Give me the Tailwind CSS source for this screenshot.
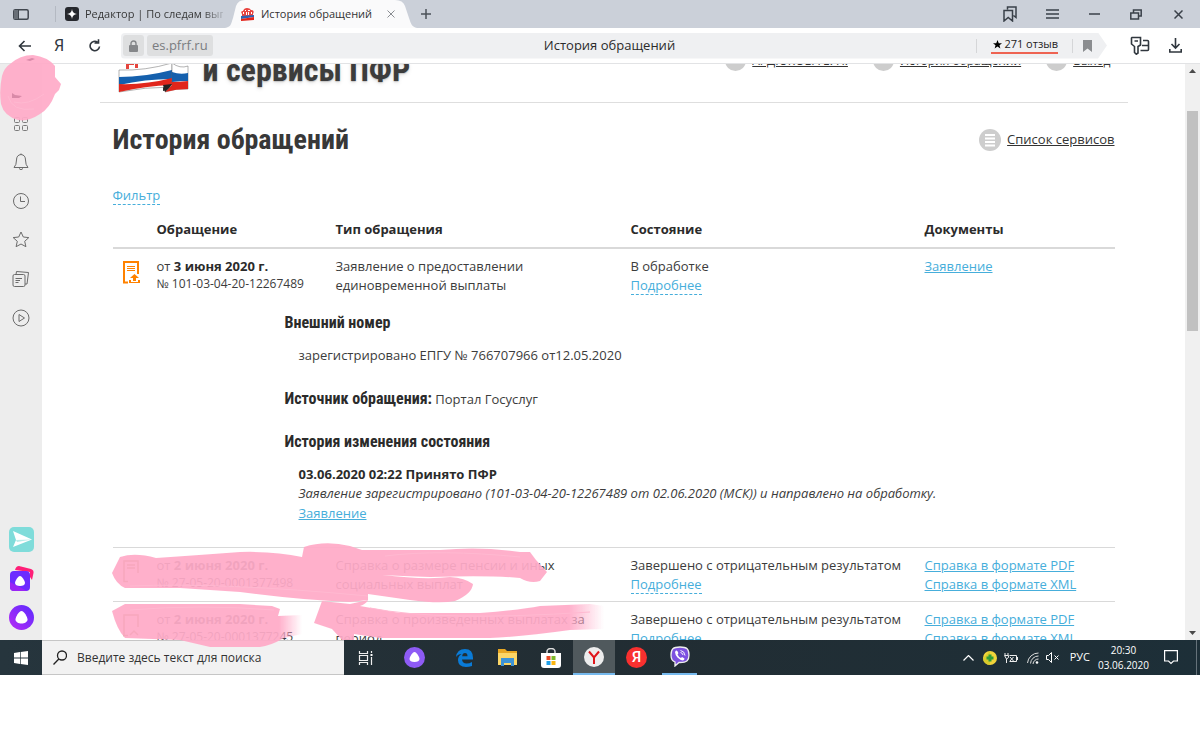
<!DOCTYPE html>
<html lang="ru">
<head>
  <meta charset="UTF-8">
  <meta name="viewport" content="width=device-width, initial-scale=1.0">
  <title>История обращений</title>
  <script src="https://cdn.jsdelivr.net/npm/@tailwindcss/browser@4"></script>
</head>
<body class="relative flex h-screen flex-col overflow-hidden bg-white pb-[71px] font-['Open_Sans','Noto_Sans',sans-serif] text-[13px] text-[#3c3c3c]">

  <!-- Вкладки -->
  <header class="flex h-7 shrink-0 items-center bg-[#cbd0d9] text-[11px] text-[#333]">
    <button class="ml-[13px] mr-[26px]" aria-label="Панель вкладок">
      <svg class="h-[11px] w-4" viewBox="0 0 16 11" fill="none" stroke="#40464e"><rect x="0.8" y="0.8" width="14.4" height="9.4" rx="1.5" stroke-width="1.5"/><path d="M1 1h4v9H1z" fill="#6a7078" stroke="none"/><path d="M5.500 1v9"/></svg>
    </button>
    <div class="flex h-4 w-[170px] items-center border-l border-[#b4b9c2] pl-[9px]">
      <svg class="mr-[6px] h-[14px] w-[14px] shrink-0" viewBox="0 0 14 14"><rect width="14" height="14" rx="3" fill="#26282d"/><path d="M7 2Q7.4 6.600 12 7Q7.400 7.400 7 12Q6.600 7.400 2 7Q6.600 6.600 7 2z" fill="#fff"/></svg>
      <span class="w-[138px] shrink-0 overflow-hidden bg-linear-to-r from-[#333] from-85% to-[#333]/20 bg-clip-text whitespace-nowrap text-transparent">Редактор | По следам вып</span>
    </div>
    <div class="relative flex h-7 w-[192px] items-center pl-[15px]">
      <svg class="absolute inset-0 h-7 w-[192px]" viewBox="0 0 192 28" preserveAspectRatio="none"><path d="M0 28C6 27 6 24 8 18L11 6Q13 0 20 0H170Q178 0 180 6L184 18C186 24 187 27 192 28z" fill="#fafafb"/></svg>
      <svg class="relative mr-[6px] h-[15px] w-[15px]" viewBox="0 0 15 15"><path d="M2 7Q0 4 3 4Q4 1 7 1Q10 1 11 3Q15 3 13 7v2H2z" fill="#e8433f"/><path d="M3 5h1v2H3zM5 3h1v1H5zM6 5h1v3H6zM8 5h1v3H8zM8 3h2v1H8zM11 5h1v2h-1z" fill="#fff"/><path d="M1 9l13-1v2l-13 2z" fill="#2c62b4"/><path d="M1 12l13-2v3l-13 1z" fill="#e2231a"/></svg>
      <span class="relative">История обращений</span>
      <button class="relative ml-auto mr-[22px]" aria-label="Закрыть вкладку">
        <svg class="h-2 w-2" viewBox="0 0 8 8" stroke="#8a8d92"><path d="M0.500 0.500l7 7M7.500 0.500l-7 7"/></svg>
      </button>
    </div>
    <button class="ml-1" aria-label="Новая вкладка">
      <svg class="h-[10px] w-[10px]" viewBox="0 0 10 10" stroke="#4c5159" stroke-width="1.500"><path d="M5 0v10M0 5h10"/></svg>
    </button>
    <div class="ml-auto mr-px flex items-center">
      <button class="flex w-[42px] justify-center" aria-label="Закладки"><svg class="h-4 w-[14px]" viewBox="0 0 14 16" fill="none" stroke="#3a4049" stroke-width="1.500"><path d="M4.500 3.500V1H13V11.500L10.500 9.500M1 4.500h8.500V15L5.200 11.500L1 15z"/></svg></button>
      <button class="flex w-[42px] justify-center" aria-label="Меню"><svg class="h-[10px] w-[13px]" viewBox="0 0 13 10" stroke="#3a4049" stroke-width="1.500"><path d="M0 1h13M0 5h13M0 9h13"/></svg></button>
      <button class="flex w-[42px] justify-center" aria-label="Свернуть"><svg class="h-[10px] w-[11px]" viewBox="0 0 11 10" stroke="#3a4049" stroke-width="1.500"><path d="M0 5h11"/></svg></button>
      <button class="flex w-[42px] justify-center" aria-label="Восстановить"><svg class="h-[11px] w-3" viewBox="0 0 12 11" fill="none" stroke="#3a4049" stroke-width="1.500"><path d="M3.500 3.500V1h7.700v6H9M0.800 4h7.700v6H0.800z"/></svg></button>
      <button class="flex w-[42px] justify-center" aria-label="Закрыть"><svg class="h-[9px] w-[9px]" viewBox="0 0 9 9" stroke="#3a4049" stroke-width="1.500"><path d="M0.500 0.500l8 8M8.500 0.500l-8 8"/></svg></button>
    </div>
  </header>

  <!-- Адресная строка -->
  <nav class="flex h-9 shrink-0 items-center border-b border-[#e2e3e5] bg-white">
    <button class="ml-[18px]" aria-label="Назад"><svg class="h-3 w-[13px]" viewBox="0 0 13 12" fill="none" stroke="#30373e" stroke-width="1.600"><path d="M13 6H1.500M6.500 1L1.500 6l5 5"/></svg></button>
    <button class="ml-[23px] w-[10px] text-center font-['Roboto',sans-serif] text-[16px] text-[#30373e]">Я</button>
    <button class="ml-[25px]" aria-label="Обновить"><svg class="h-[13px] w-3" viewBox="0 0 12 13" fill="none" stroke="#30373e" stroke-width="1.600"><path d="M10.500 7.500a4.700 4.700 0 1 1-2-4.400M5.500 4h4V0.300"/></svg></button>
    <div class="ml-5 flex h-[26px] flex-1 items-center rounded-l bg-[#eff0f2] pl-[2px] [clip-path:polygon(0_0,calc(100%-9px)_0,100%_50%,calc(100%-9px)_100%,0_100%)]">
      <span class="mr-[3px] flex h-[21px] w-[21px] items-center justify-center rounded-[3px] bg-[#dedfe0]"><svg class="h-3 w-[9px]" viewBox="0 0 9 12"><path d="M2 6V3.500a2.500 2.500 0 0 1 5 0V6" fill="none" stroke="#85878a" stroke-width="1.400"/><rect y="5" width="9" height="7" rx="1" fill="#85878a"/></svg></span>
      <span class="rounded-[3px] bg-[#dedfe0] px-[5px] leading-[21px] text-[#7a7c7f]">es.pfrf.ru</span>
      <span class="flex-1 pl-[30px] text-center text-[#2b2b2b]">История обращений</span>
      <span class="h-[14px] border-l border-[#d5d6d8]"></span>
      <span class="ml-[14px] flex h-[17px] items-center border-b-2 border-[#ee6352] text-[11px] text-[#222]"><svg class="mx-[2px] h-[9px] w-[9px]" viewBox="0 0 10 10"><path d="M5 0l1.400 3.500H10L7.200 5.800 8.200 9.500 5 7.300 1.800 9.500 2.800 5.800 0 3.500h3.600z"/></svg>271 отзыв</span>
      <span class="ml-[14px] h-[14px] border-l border-[#d5d6d8]"></span>
      <svg class="ml-[10px] mr-[15px] h-3 w-[9px]" viewBox="0 0 9 12"><path d="M0 0h9v12L4.500 8.500 0 12z" fill="#8b8d90"/></svg>
    </div>
    <button class="ml-[23px]" aria-label="Пароли"><svg class="h-[19px] w-5" viewBox="0 0 20 19" fill="none" stroke="#30373e" stroke-width="1.600"><path d="M2 1.500h8.500V9L8 10.500V17L6.300 18.200 4.500 16.500V10.500L1.500 8V2zM4.500 5h3.500M13 4.500h4.500a1 1 0 0 1 1 1v8a1 1 0 0 1-1 1H10.500M12 9.500h6.500"/></svg></button>
    <button class="ml-[19px] mr-[18px]" aria-label="Загрузки"><svg class="h-[15px] w-[13px]" viewBox="0 0 13 15" fill="none" stroke="#30373e" stroke-width="1.600"><path d="M6.500 0v9.500M2.500 6l4 4 4-4M0.800 11v3h11.400v-3"/></svg></button>
  </nav>

  <div class="flex min-h-0 flex-1">
    <!-- Боковая панель браузера -->
    <aside class="flex w-[42px] shrink-0 flex-col items-center bg-[#ededed] pb-[10px] pt-[49px]">
      <div class="flex flex-col items-center gap-[19px]">
        <svg class="h-5 w-4" viewBox="0 0 16 20" fill="none" stroke="#7b7b7b"><rect x="1.500" y="4.500" width="5" height="5" rx="1"/><rect x="9.500" y="4.500" width="5" height="5" rx="1"/><rect x="1.500" y="12.500" width="5" height="5" rx="1"/><rect x="9.500" y="12.500" width="5" height="5" rx="1"/></svg>
        <svg class="h-5 w-4" viewBox="0 0 16 20" fill="none" stroke="#6b6b6b"><path d="M8 1.500v1M1 15.500Q3.500 13 3.500 8Q3.500 3 8 2.500Q12.500 3 12.500 8Q12.500 13 15 15.500zM6 16.500Q8 19 10 16.500"/></svg>
        <svg class="h-5 w-[18px]" viewBox="0 0 18 20" fill="none" stroke="#6b6b6b"><circle cx="9" cy="10" r="7.500"/><path d="M8.500 5.500V10.500h4.500"/></svg>
        <svg class="h-5 w-[18px]" viewBox="0 0 18 20" fill="none" stroke="#6b6b6b"><path d="M9 2l2.300 5 5.500.600-4.100 3.700 1.200 5.400L9 14l-4.900 2.700 1.200-5.400L1.200 7.600 6.700 7z"/></svg>
        <svg class="h-5 w-[18px]" viewBox="0 0 18 20" fill="none" stroke="#6b6b6b"><rect x="1" y="5.500" width="12" height="12" rx="1.500"/><path d="M4 5.500L4.500 2.500l12 1-1.500 11.500H13M3.500 9.500h6.500M3.500 11.500h4.500M3.500 13.500h3"/></svg>
        <svg class="h-5 w-[18px]" viewBox="0 0 18 20" fill="none" stroke="#6b6b6b"><circle cx="9" cy="10" r="8"/><path d="M7 6.500v7l5.500-3.500z"/></svg>
      </div>
      <div class="mt-auto flex flex-col items-center gap-[14px]">
        <svg class="h-[25px] w-[25px]" viewBox="0 0 25 25"><rect width="25" height="25" rx="5" fill="#7fdcda"/><path d="M4 4l19 8.500L4 20l3-7z" fill="#fff"/><path d="M7 13l16-0.500L8 15z" fill="#b8ecea"/></svg>
        <svg class="h-[25px] w-[25px]" viewBox="0 0 25 25"><path d="M6 4Q7 0 10 0L22 3Q25 4 24.500 7L23 14L21 11V6z" fill="#ff1f77"/><rect x="1" y="5" width="20" height="20" rx="4" fill="#6c2bff"/><path d="M1 16v5a4 4 0 0 0 4 4h13z" fill="#9a25f5"/><path d="M11 10c2 0 5 5 5 7s-2 3-5 3-5-1-5-3 3-7 5-7z" fill="#fff"/></svg>
        <svg class="h-[25px] w-[25px]" viewBox="0 0 25 25"><defs><linearGradient id="alice" x1="0" y1="1" x2="1" y2="0"><stop stop-color="#b92bf5"/><stop offset="1" stop-color="#5a2bff"/></linearGradient></defs><circle cx="12.500" cy="12.500" r="12.500" fill="url(#alice)"/><path d="M12.500 6c2.500 0 6 6 6 8.500s-3 4-6 4-6-1.500-6-4 3.500-8.500 6-8.500z" fill="#fff"/></svg>
      </div>
    </aside>

    <!-- Страница ПФР -->
    <main class="min-w-0 flex-1 overflow-hidden">
      <div class="mx-auto max-w-[1028px]">
        <div class="flex h-[39px] items-end justify-between overflow-hidden border-b border-[#dedede]">
          <div class="flex items-end">
            <svg class="ml-[18px] mr-[13px] h-[39px] w-[72px]" viewBox="0 0 72 39"><path d="M8 0h3v6H8zM17 0h3v5h-3zM8 0h8v2H8z" fill="#e5443d"/><path d="M45 8L54 4V26L45 28z" fill="#2b2b2b"/><path d="M1 7Q27 8 54 0V24Q27 24 1 29z" fill="#fff" stroke="#666" stroke-width="0.500"/><path d="M1 14Q27 14 54 7V16Q27 16 1 22z" fill="#1560ad"/><path d="M1 21Q27 22 54 15V22Q27 23 1 29z" fill="#e1261c"/><path d="M54 0Q62 6 70 3V26Q58 25 47 29Q50 24 54 22z" fill="#fff" stroke="#666" stroke-width="0.500"/><path d="M54 9Q62 12 70 10V18Q62 18 54 19z" fill="#1560ad"/><path d="M54 19Q62 19 70 18V26Q58 26 47 29Q51 25 54 22z" fill="#e1261c"/><path d="M45 22l9-1q-2 4-7 8z" fill="#222"/></svg>
            <span class="pb-[14px] font-['Roboto_Condensed','Liberation_Sans_Narrow',sans-serif] text-[32px] leading-9 font-bold text-shadow-md">и сервисы ПФР</span>
          </div>
          <div class="mr-[17px] flex items-center gap-[25px] pb-[31px] text-[12px] leading-5 text-[#333]">
            <a href="#" class="flex items-center gap-[6px] underline"><span class="h-[21px] w-[21px] rounded-full bg-[#cdcdcd]"></span>АРДЮКОВА Е. Н.</a>
            <a href="#" class="flex items-center gap-[6px] underline"><span class="h-[21px] w-[21px] rounded-full bg-[#cdcdcd]"></span>История обращений</a>
            <a href="#" class="flex items-center gap-[6px] underline"><span class="h-[21px] w-[21px] rounded-full bg-[#cdcdcd]"></span>Выход</a>
          </div>
        </div>

        <div class="px-[13px]">
          <div class="flex items-center justify-between pt-[17px]">
            <h1 class="font-['Roboto_Condensed','Liberation_Sans_Narrow',sans-serif] text-[28px] leading-10 font-bold text-[#383838]">История обращений</h1>
            <a href="#" class="flex items-center gap-[6px] text-[#333] underline">
              <svg class="h-[22px] w-[22px]" viewBox="0 0 22 22"><circle cx="11" cy="11" r="11" fill="#cdcdcd"/><path d="M6 6h10M6 9.500h10M6 13h10M6 16.500h10" stroke="#fff" stroke-width="2"/></svg>Список сервисов</a>
          </div>
          <div class="mt-[27px] h-[29px] leading-[17px]"><a href="#" class="inline-block border-b border-dashed border-[#46aedb] text-[#46aedb]">Фильтр</a></div>

          <table class="w-full table-fixed text-left leading-[19px]">
            <colgroup><col class="w-[44px]"><col class="w-[179px]"><col class="w-[295px]"><col class="w-[294px]"><col></colgroup>
            <thead>
              <tr class="h-[32px] border-b-2 border-[#d9d9d9] align-top text-[#2b2b2b]">
                <th></th><th class="pt-1">Обращение</th><th class="pt-1">Тип обращения</th><th class="pt-1">Состояние</th><th class="pt-1">Документы</th>
              </tr>
            </thead>
            <tbody class="align-top">
              <tr>
                <td class="pl-[10px] pt-3"><svg class="h-[23px] w-[18px]" viewBox="0 0 18 23"><path d="M5 21.500H1V1h14v12" fill="none" stroke="#ff8200" stroke-width="2"/><path d="M4 5.500h8M4 7.500h8M4 9.500h8" stroke="#ff8200"/><path d="M11.500 13l4.500 4h-3v3h-3v-3H7zM6 19h2v2h7v-2h2v3H6z" fill="#ff8200"/></svg></td>
                <td class="pt-2">от <b class="text-[#2b2b2b]">3 июня 2020 г.</b><div class="text-[12px] leading-4">№ 101-03-04-20-12267489</div></td>
                <td class="pt-2">Заявление о предоставлении<br>единовременной выплаты</td>
                <td class="pt-2">В обработке<br><a href="#" class="inline-block border-b border-dashed border-[#46aedb] leading-[18px] text-[#46aedb]">Подробнее</a></td>
                <td class="pt-2"><a href="#" class="text-[#46aedb] underline">Заявление</a></td>
              </tr>
              <tr>
                <td colspan="5" class="pb-[24px] pl-[172px] pt-[18px] leading-5">
                  <h2 class="font-['Roboto_Condensed','Liberation_Sans_Narrow',sans-serif] text-[16px] font-bold text-[#2b2b2b]">Внешний номер</h2>
                  <p class="ml-[14px] mt-3">зарегистрировано ЕПГУ № 766707966 от12.05.2020</p>
                  <p class="mt-[24px]"><b class="font-['Roboto_Condensed','Liberation_Sans_Narrow',sans-serif] text-[16px] text-[#2b2b2b]">Источник обращения:</b> Портал Госуслуг</p>
                  <h2 class="mt-[23px] font-['Roboto_Condensed','Liberation_Sans_Narrow',sans-serif] text-[16px] font-bold text-[#2b2b2b]">История изменения состояния</h2>
                  <div class="ml-[14px] mt-3">
                    <b class="text-[#2b2b2b]">03.06.2020 02:22 Принято ПФР</b>
                    <p class="leading-[19px] italic">Заявление зарегистрировано (101-03-04-20-12267489 от 02.06.2020 (МСК)) и направлено на обработку.</p>
                    <a href="#" class="text-[#46aedb] underline">Заявление</a>
                  </div>
                </td>
              </tr>
              <tr class="h-[54px] border-t border-[#d9d9d9]">
                <td class="pl-[10px] pt-3"><svg class="h-[23px] w-[18px]" viewBox="0 0 18 23" fill="none" stroke="#9a7a30" stroke-width="1.500"><path d="M5 21.500H1V1h14v12M4 5h8M4 8h8"/></svg></td>
                <td class="pt-2">от <b>2 июня 2020 г.</b><div class="text-[12px] leading-4">№ 27-05-20-0001377498</div></td>
                <td class="pt-2">Справка о размере пенсии и иных<br>социальных выплат</td>
                <td class="pt-2">Завершено с отрицательным результатом<br><a href="#" class="inline-block border-b border-dashed border-[#46aedb] leading-[18px] text-[#46aedb]">Подробнее</a></td>
                <td class="pt-2 text-[#46aedb]"><a href="#" class="underline">Справка в формате PDF</a><br><a href="#" class="underline">Справка в формате XML</a></td>
              </tr>
              <tr class="h-[54px] border-t border-[#d9d9d9]">
                <td class="pl-[10px] pt-3"><svg class="h-[23px] w-[18px]" viewBox="0 0 18 23" fill="none" stroke="#9a7a30" stroke-width="1.500"><path d="M5 21.500H1V1h14v12M7 21l4-4 4 4"/></svg></td>
                <td class="pt-2">от <b>2 июня 2020 г.</b><div class="text-[12px] leading-4">№ 27-05-20-0001377245</div></td>
                <td class="pt-2">Справка о произведенных выплатах за<br>период</td>
                <td class="pt-2">Завершено с отрицательным результатом<br><a href="#" class="text-[#46aedb]">Подробнее</a></td>
                <td class="pt-2 text-[#46aedb]"><a href="#" class="underline">Справка в формате PDF</a><br><a href="#" class="underline">Справка в формате XML</a></td>
              </tr>
            </tbody>
          </table>
        </div>
      </div>
    </main>

    <!-- Полоса прокрутки -->
    <div class="flex w-[15px] shrink-0 flex-col items-center bg-[#f0f0f0] pb-[5px] pt-[5px]">
      <svg class="h-1 w-[7px]" viewBox="0 0 7 4"><path d="M0 4L3.500 0 7 4z" fill="#4a4a4a"/></svg>
      <div class="mt-[38px] h-[220px] w-[11px] bg-[#c1c1c1]"></div>
      <svg class="mt-auto h-1 w-[7px]" viewBox="0 0 7 4"><path d="M0 0h7L3.500 4z" fill="#4a4a4a"/></svg>
    </div>
  </div>

  <!-- Панель задач Windows -->
  <footer class="flex h-[35px] shrink-0 items-center bg-linear-to-r from-[#26353d] via-[#222d33] to-[#1d2f38] text-white">
    <button class="flex w-[42px] justify-center" aria-label="Пуск"><svg class="h-[14px] w-[14px]" viewBox="0 0 14 14" fill="#fff"><path d="M0 2l6-0.900V6.600H0zM6.700 1L14 0v6.600H6.700zM0 7.400h6v5.500L0 12zM6.700 7.400H14V14L6.700 13z"/></svg></button>
    <label class="flex h-[35px] w-[302px] items-center border-y border-[#c6c6c6] bg-[#f2f2f2] pl-[11px]">
      <svg class="mr-[10px] h-[15px] w-[14px] shrink-0" viewBox="0 0 14 15" fill="none" stroke="#222" stroke-width="1.300"><circle cx="9" cy="5.500" r="4.500"/><path d="M5.800 9L0.500 14.500"/></svg>
      <input type="text" aria-label="Поиск" placeholder="Введите здесь текст для поиска" class="w-full bg-transparent text-[12px] outline-none placeholder:text-[#333]">
    </label>
    <div class="flex h-full items-center">
      <button class="flex w-[43px] justify-center" aria-label="Представление задач"><svg class="h-[14px] w-4" viewBox="0 0 16 14" fill="none" stroke="#eee" stroke-width="1.200"><path d="M1.500 0v2.500h8V0M1.500 14v-2.500h8V14M1.500 4.500h8v5h-8zM13.500 0v2M13.500 6v8"/><path d="M12.500 3h2v2h-2z" fill="#fff" stroke="none"/></svg></button>
      <button class="ml-[6px] flex w-[43px] justify-center" aria-label="Алиса"><svg class="h-[21px] w-[21px]" viewBox="0 0 21 21"><circle cx="10.500" cy="10.500" r="10.500" fill="#8e5bf5"/><path d="M10.500 5c2 0 5 5 5 7s-2 3-5 3-5-1-5-3 3-7 5-7z" fill="#fff"/></svg></button>
      <button class="ml-[7px] flex w-[43px] justify-center" aria-label="Edge"><svg class="h-[18px] w-[17px]" viewBox="0 0 17 18"><path d="M0 8Q1 0 9 0Q17 0 17 9v1.500H6Q6.500 14.500 10.500 14.500Q13.500 14.500 16 13v4Q13 18 10 18Q2 18 2 11Q2 7 5.500 5Q2 5 0 8zM6.200 7.300h5.300Q11.500 4 9 4Q6.500 4 6.200 7.300z" fill="#0a7bd7"/></svg></button>
      <button class="flex w-[43px] justify-center" aria-label="Проводник"><svg class="h-[17px] w-[19px]" viewBox="0 0 19 17"><path d="M0 0h7l2 2h10v14H0z" fill="#e8a723"/><path d="M0 4h19v12H0z" fill="#fcd667"/><path d="M3 9h13v8h-3v-3H6v3H3z" fill="#3d93d6"/></svg></button>
      <button class="flex w-[43px] justify-center" aria-label="Магазин"><svg class="h-5 w-5" viewBox="0 0 20 20"><path d="M6 6V3.500a4 3 0 0 1 8 0V6" fill="none" stroke="#ddd" stroke-width="1.500"/><path d="M0 5h20v12q0 3-3 3H3q-3 0-3-3z" fill="#fff"/><path d="M5.500 8h4v4h-4z" fill="#e84a27"/><path d="M10.500 8h4v4h-4z" fill="#7db82b"/><path d="M5.500 13h4v4h-4z" fill="#1e9fe8"/><path d="M10.500 13h4v4h-4z" fill="#fbb511"/></svg></button>
      <button class="ml-px flex h-full w-[42px] items-center justify-center border-b-2 border-[#76b9ed] bg-[#50595d]" aria-label="Яндекс.Браузер"><svg class="h-5 w-5" viewBox="0 0 20 20"><circle cx="10" cy="10" r="10" fill="#ededed"/><path d="M5 4.500l5 6 5-6M10 10V17" fill="none" stroke="#e0161b" stroke-width="2"/></svg></button>
      <button class="flex w-[43px] justify-center" aria-label="Яндекс"><span class="h-[21px] w-[21px] rounded-full bg-[#f9302f] font-['Roboto',sans-serif] text-[15px] leading-[21px] font-medium">Я</span></button>
      <button class="ml-[4px] flex h-full w-[35px] items-center justify-center border-b-2 border-[#76b9ed]" aria-label="Viber"><svg class="h-[21px] w-5" viewBox="0 0 20 21"><path d="M10 1C3 1 1 3 1 9c0 4 1 6 4 7v4l4-3.500h1c7 0 9-2 9-7.500 0-6-2-8-9-8z" fill="#7d51e0" stroke="#eee" stroke-width="1.300"/><path d="M6 4.500Q7 4 8 6L8.300 7.500 7.500 8.500Q8.500 11 11 12L12 11 14.500 12.500Q14.500 14 13 14.500Q10 14 7.500 11.500Q5 8.500 5 6z" fill="#fff"/><path d="M10.500 4.500q4 0.500 4.500 5M10.500 6.500q2 0.300 2.500 2.500" fill="none" stroke="#fff" stroke-width="0.900"/></svg></button>
    </div>
    <div class="ml-auto flex h-full items-center text-[10px]">
      <svg class="mr-[9px] h-[6px] w-[11px]" viewBox="0 0 11 6" fill="none" stroke="#fff" stroke-width="1.200"><path d="M0.500 5.500l5-5 5 5"/></svg>
      <svg class="mr-[7px] h-[14px] w-[14px]" viewBox="0 0 14 14"><circle cx="7" cy="7" r="7" fill="#f2d43a"/><path d="M0 7a7 7 0 0 0 7 7V0z" fill="#d9cb2c"/><path d="M5.500 3.500h3v2h2v3h-2v2h-3v-2h-2v-3h2z" fill="#2e9b3a"/></svg>
      <svg class="mr-[9px] h-[10px] w-[14px]" viewBox="0 0 14 10" fill="none" stroke="#eee"><path d="M1 0v2M4 0v2M0.500 2.500h4v2l-2 1.500zM2.500 6v4M5.500 2.500h7v6h-7M13.500 4v3M6 4l3.500 4M9.500 4L6 8"/></svg>
      <svg class="mr-[7px] h-3 w-3" viewBox="0 0 12 12" fill="none" stroke="#ddd"><path d="M0.500 11A11 11 0 0 1 11.500 1M3.500 11.500A8 8 0 0 1 11.500 4M6 12A5.500 5.500 0 0 1 11.500 7"/><circle cx="10" cy="10.500" r="1.300" fill="#fff" stroke="none"/></svg>
      <svg class="mr-[11px] h-[11px] w-[13px]" viewBox="0 0 13 11" fill="none" stroke="#fff"><path d="M0.500 3.500h2l3-3v10l-3-3h-2zM8.500 3.500l4 4M12.500 3.500l-4 4"/></svg>
      <span class="mr-[8px] text-[11px]">РУС</span>
      <span class="mr-[15px] text-center leading-[15px]">20:30<br>03.06.2020</span>
      <svg class="mr-[18px] h-[15px] w-[14px]" viewBox="0 0 14 15" fill="none" stroke="#fff" stroke-width="1.200"><path d="M0.600 0.600h12.800v10.400H9.500L7 13.500 4.500 11H0.600z"/></svg>
      <span class="h-full w-[4px] border-l border-[#65727a]"></span>
    </div>
  </footer>

  <!-- Розовые мазки поверх личных данных -->
  <svg class="pointer-events-none absolute left-0 top-0 h-[746px] w-[1200px]" viewBox="0 0 1200 746" fill="#ffabc8">
    <defs>
      <linearGradient id="fadeA" x1="0" x2="1"><stop offset="0.880" stop-color="#ffabc8"/><stop offset="1" stop-color="#ffabc8" stop-opacity="0"/></linearGradient>
    </defs>
    <g opacity="0.930">
      <path d="M10 64Q20 55 33 55Q48 57 55 66L55 77L61 84L59 90L55 94Q50 108 40 114Q28 122 18 120Q4 116 1 104Q-1 90 2 76Q4 68 10 64z"/>
      <path d="M112 573L120 557Q135 552 156 558Q200 555 240 552Q275 551 302 557L304 547Q325 540 350 546L362 550H440Q480 546 520 552H530L536 560L547 572L540 581Q530 584 520 578Q490 575 430 577Q400 576 382 575Q425 580 450 577Q465 578 473 584Q472 594 455 601Q440 604 410 600L368 594V600L350 602Q300 600 240 592L180 588L125 588Q116 584 112 573z"/>
      <path d="M112 611L125 604H240L272 606L280 609L278 616L302 615V634L284 638Q270 646 260 647H210L180 640L125 638Q117 630 112 611z" fill="url(#fadeA)"/>
      <path d="M322 601L350 604L368 600Q366 604 360 606L400 613H480Q520 610 540 606L590 604L604 606V629L570 630Q520 637 490 638H380L354 634V640H342L332 629L314 623z" fill="url(#fadeA)"/>
    </g>
    <path d="M26 60l6-2 3 1-5 2zM12 93v5h7l3-2-7-1z" fill="#d98aa8"/>
    <path d="M8 96Q12 112 34 109M14 102Q28 106 44 94M130 586Q220 582 368 596M385 556Q440 549 520 557M370 608Q440 622 590 612M130 610Q200 604 274 610" fill="none" stroke="#ffb9d1"/>
  </svg>
</body>
</html>
